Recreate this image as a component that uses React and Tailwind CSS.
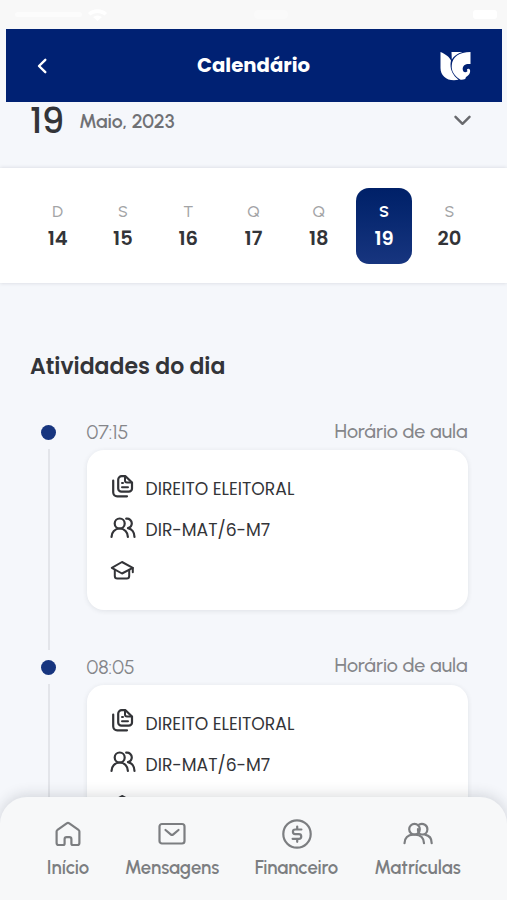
const days = [
  { letter: 'D', day: 14 },
  { letter: 'S', day: 15 },
  { letter: 'T', day: 16 },
  { letter: 'Q', day: 17 },
  { letter: 'Q', day: 18 },
  { letter: 'S', day: 19, selected: true },
  { letter: 'S', day: 20 },
];

const activities = [
  { time: '07:15', kind: 'Horário de aula', subject: 'DIREITO ELEITORAL', group: 'DIR-MAT/6-M7' },
  { time: '08:05', kind: 'Horário de aula', subject: 'DIREITO ELEITORAL', group: 'DIR-MAT/6-M7' },
];

function Stroke({ children, className, viewBox, width = 2.2 }) {
  return (
    <svg className={className} viewBox={viewBox} fill="none" stroke="currentColor" strokeWidth={width} strokeLinecap="round" strokeLinejoin="round">
      {children}
    </svg>
  );
}

const DocsIcon = () => (
  <Stroke className="h-6 w-[26px]" viewBox="0 0 26 24">
    <path d="M3.200 5.500v11.800a4 4 0 0 0 4 4h9.800" />
    <path d="M12 1.200h3.500l6.500 6.300v6a3.200 3.200 0 0 1-3.200 3.200H11.400a3.200 3.200 0 0 1-3.200-3.200V4.700A3.500 3.500 0 0 1 11.700 1.200z" />
    <path d="M15 1.700v3.800a2 2 0 0 0 2 2h4.500M12 8h1M12 12.200h6" strokeWidth="2" />
  </Stroke>
);

const PeopleIcon = () => (
  <Stroke className="h-6 w-[26px]" viewBox="0 0 26 24">
    <circle cx="9.700" cy="7.500" r="5" />
    <path d="M1.500 21c0-4.900 3.500-8.500 8.200-8.500s8.200 3.600 8.200 8.500" />
    <path d="M16.200 2.700c3.200-.5 5.600 1.900 5.600 4.600 0 2.400-1.600 4.200-3.800 4.800 3.900.9 6.500 4.500 6.500 8.900" />
  </Stroke>
);

const CapIcon = () => (
  <Stroke className="h-6 w-[26px]" viewBox="0 0 26 24" width={2}>
    <path d="M12 4 1.800 9.800 12 15.500l10.800-5.700z" />
    <path d="M4.800 11.700v6.300c0 1.600 1 2.500 2.500 2.500h9.400c1.600 0 2.500-.9 2.500-2.500v-6.300M22.800 10v4.200" />
  </Stroke>
);

const HomeIcon = () => (
  <Stroke className="h-[30px] w-[30px]" viewBox="0 0 30 30">
    <path d="M3.600 12.600a2 2 0 0 1 .9-1.700l9.200-6.600a2.200 2.200 0 0 1 2.600 0l9.200 6.600a2 2 0 0 1 .9 1.700v11.400a2 2 0 0 1-2 2h-4.500a1.500 1.500 0 0 1-1.500-1.500v-4.300a2 2 0 0 0-2-2h-2.800a2 2 0 0 0-2 2v4.300a1.500 1.500 0 0 1-1.500 1.500H5.600a2 2 0 0 1-2-2z" />
  </Stroke>
);

const MailIcon = () => (
  <Stroke className="h-[30px] w-[30px]" viewBox="0 0 30 30">
    <rect x="2.500" y="5" width="25" height="19.500" rx="2.500" />
    <path d="m8.500 11 5.200 4.300a2 2 0 0 0 2.600 0l5.200-4.300" />
  </Stroke>
);

const MoneyIcon = () => (
  <Stroke className="h-[30px] w-[30px]" viewBox="0 0 30 30">
    <circle cx="15" cy="15" r="13.700" />
    <path d="M19.400 10.500h-6.200a2.300 2.300 0 0 0 0 4.600h3.700a2.350 2.350 0 0 1 0 4.700h-6.300M15.200 7.500v3M15.200 19.800v3" />
  </Stroke>
);

const EnrollIcon = () => (
  <Stroke className="h-[30px] w-[30px]" viewBox="0 0 30 30">
    <circle cx="11.500" cy="10.200" r="5.300" />
    <path d="M1.500 24.200c0-5 3.500-8.500 8.500-8.500h2.500c5 0 8.500 3.500 8.500 8.500" />
    <path d="M16.200 5.500c4.200-1.600 8.200.8 8.200 4.700 0 2.900-2.200 5.300-5.200 5.300-3.200 0-4.600-2.600-4.200-5.300M22 15.700c4.200.8 6.700 4 6.700 8.500" />
  </Stroke>
);

const tabs = [
  { label: 'Início', Icon: HomeIcon, box: 'w-[42px]' },
  { label: 'Mensagens', Icon: MailIcon, box: 'w-[93px]' },
  { label: 'Financeiro', Icon: MoneyIcon, box: 'w-[83px]' },
  { label: 'Matrículas', Icon: EnrollIcon, box: 'w-[86px]' },
];

function Activity({ time, kind, subject, group }) {
  return (
    <div className="flex h-[234.5px] shrink-0">
      <div className="flex w-[16px] flex-col items-center">
        <div className="mt-[9px] size-[15px] shrink-0 rounded-full bg-[#17357f]" />
        <div className="mt-[9px] h-[201px] w-[2px] shrink-0 bg-[#e3e5ea]" />
      </div>
      <div className="ml-[30px] flex w-[381px] flex-col">
        <div className="flex h-[34px] shrink-0 items-center justify-between whitespace-nowrap font-['Urbanist','Inter',sans-serif] text-[19.7px] text-[#85868a]">
          <span>{time}</span>
          <span className="-mt-[3px] font-medium">{kind}</span>
        </div>
        <div className="flex h-[159.5px] flex-col rounded-[17px] bg-white pt-[18px] pl-[23px] text-[#333438] shadow-[0_1px_5px_rgba(40,45,60,0.1)]">
          <div className="flex h-[41.500px] items-center gap-[10px]">
            <div className="mb-[4px]"><DocsIcon /></div>
            <span className="mt-[3px] whitespace-nowrap text-[17.2px]">{subject}</span>
          </div>
          <div className="flex h-[41.500px] items-center gap-[10px]">
            <div className="mb-[5px]"><PeopleIcon /></div>
            <span className="mt-[2px] whitespace-nowrap text-[17.2px]">{group}</span>
          </div>
          <div className="flex h-[41.500px] items-center">
            <div className="mb-[4px]"><CapIcon /></div>
          </div>
        </div>
      </div>
    </div>
  );
}

export default function App() {
  return (
    <div className="relative flex h-[900px] w-[507px] flex-col overflow-hidden bg-[#f5f7fb] font-['Poppins','Inter','Liberation_Sans',sans-serif]">
      <div className="flex h-[29px] shrink-0 items-center justify-between bg-[#f8f8f8] pr-[10px] pl-[15px] text-white">
        <div className="flex w-[92px] items-center justify-between">
          <div className="h-[5px] w-[67px] rounded bg-white/50" />
          <svg className="h-[12px] w-[19px]" viewBox="0 0 19 12" fill="currentColor">
            <path d="M0 4c5-5 14-5 19 0l-2.500 2.500c-4-3.500-10-3.500-14 0zM5 8c3-2 6-2 9 0l-4.500 4z" />
          </svg>
        </div>
        <div className="mr-[38px] h-[9px] w-[34px] rounded bg-white/30" />
        <div className="h-[9px] w-[24px] rounded-[3px] bg-white" />
      </div>

      <header className="mr-[5px] ml-[6px] flex h-[73px] shrink-0 items-center justify-between bg-[#002173] pr-[31px] pl-[31px] text-white">
        <Stroke className="h-[16px] w-[10px]" viewBox="0 0 10 16" width={2.4}>
          <path d="M8.300 1.800 2 8l6.300 6.200" />
        </Stroke>
        <h1 className="ml-[20px] text-[19.7px] font-bold">Calendário</h1>
        <svg className="h-[30px] w-[31px]" viewBox="0 0 31 30">
          <path fill="#fff" d="M.5 1C5.500 3 9.500 6 11 9.500c-1.600 7.500.8 14 7.500 19.300C8 31 .5 25.500.5 17z" />
          <path fill="#fff" d="M11.500 1h11C17.500 2.200 14 5 11.800 8.500z" />
          <path fill="#fff" d="M30.500 1v12c-4.800-.6-7.800 1.300-7.800 5 0 3.200 2.800 4.400 4.900 2-.7-.4-.8-1.200-.5-1.700.7-1 2.500-.6 2.900.6.700 3-1.500 5.800-4 7.100l-.8 2c-1.800.7-3.600 1-5.100.6-5.900-3.700-9-8.700-8.300-14.500C12.300 6.300 19 1 30.500 1z" />
        </svg>
      </header>

      <div className="flex h-[66px] shrink-0 items-start pr-[36px] pl-[30px]">
        <span className="mt-[1px] w-[34px] text-[35.5px] leading-[36px] font-medium tracking-[-0.8px] text-[#333438]">19</span>
        <span className="mt-[7px] ml-[15px] whitespace-nowrap font-['Urbanist','Inter',sans-serif] text-[19.5px] leading-[24px] font-semibold text-[#707175]">Maio, 2023</span>
        <Stroke className="mt-[13px] ml-auto h-[11px] w-[17px]" viewBox="0 0 17 11" width={2.4}>
          <path stroke="#68696d" d="m1.500 1.800 7 7 7-7" />
        </Stroke>
      </div>

      <div className="grid h-[115px] shrink-0 grid-cols-7 items-center justify-items-center bg-white px-[25px] shadow-[0_0_4px_rgba(40,45,60,0.16)]">
        {days.map(({ letter, day, selected }) => (
          <div
            key={day}
            className={
              selected
                ? 'flex h-[76px] w-[56px] flex-col items-center rounded-[13px] bg-gradient-to-b from-[#002068] to-[#17357f] pt-[15px] text-white'
                : 'flex h-[76px] w-[56px] flex-col items-center pt-[15px] text-[#333438]'
            }
          >
            <span className={selected ? "font-['Urbanist','Inter',sans-serif] text-[16px] leading-[18px] font-bold" : "font-['Urbanist','Inter',sans-serif] text-[16px] leading-[18px] font-medium text-[#a3a4a6]"}>{letter}</span>
            <span className="mt-[5px] text-[19.5px] leading-[25px] font-semibold">{day}</span>
          </div>
        ))}
      </div>

      <h2 className="mt-[69px] ml-[30px] shrink-0 text-[22px] leading-[30px] font-semibold text-[#333438]">Atividades do dia</h2>

      <main className="mt-[34px] flex flex-col pl-[40.500px]">
        {activities.map((item) => (
          <Activity key={item.time} {...item} />
        ))}
      </main>

      <nav className="absolute inset-x-0 bottom-0 flex h-[103.5px] gap-[36.5px] rounded-t-[27px] bg-[#f7f8f9] pt-[22.5px] pl-[47px] text-[#7c7e81] shadow-[0_-2px_14px_rgba(30,35,50,0.16)]">
        {tabs.map(({ label, Icon, box }) => (
          <div key={label} className={`flex flex-col items-center ${box}`}>
            <Icon />
            <span className="mt-[7px] whitespace-nowrap font-['Urbanist','Inter',sans-serif] text-[18.5px] leading-[24px] font-semibold">{label}</span>
          </div>
        ))}
      </nav>
    </div>
  );
}
